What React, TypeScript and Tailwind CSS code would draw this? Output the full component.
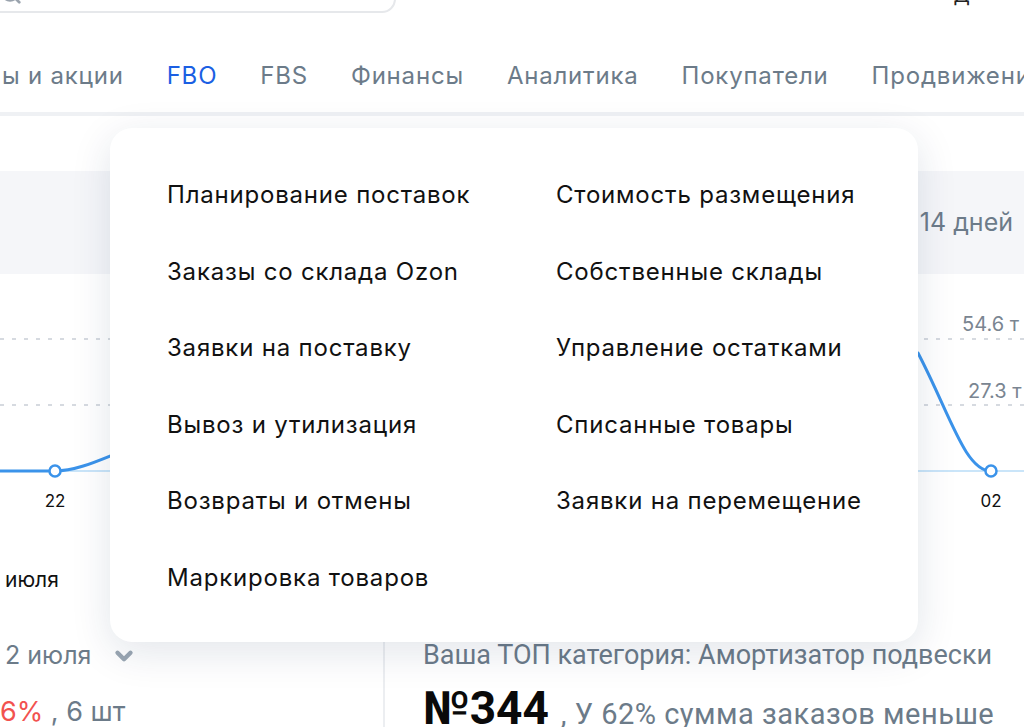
import React from 'react';
import { Search, ChevronDown } from 'lucide-react';

const tabs = ['Цены и акции', 'FBO', 'FBS', 'Финансы', 'Аналитика', 'Покупатели', 'Продвижение'];

const leftMenu = [
  'Планирование поставок',
  'Заказы со склада Ozon',
  'Заявки на поставку',
  'Вывоз и утилизация',
  'Возвраты и отмены',
  'Маркировка товаров',
];

const rightMenu = [
  'Стоимость размещения',
  'Собственные склады',
  'Управление остатками',
  'Списанные товары',
  'Заявки на перемещение',
];

const Chart = () => (
  <svg width="1024" height="257" viewBox="0 0 1024 257" className="block">
    <line x1="0" y1="65" x2="1024" y2="65" stroke="#c9ced6" strokeWidth="1.5" strokeDasharray="4 8" />
    <line x1="0" y1="131" x2="1024" y2="131" stroke="#c9ced6" strokeWidth="1.5" strokeDasharray="4 8" />
    <line x1="0" y1="197" x2="1024" y2="197" stroke="#b9dcf7" strokeWidth="1.5" />
    <path
      d="M0 197 L55 197 C75 197 95 188 120 178 C300 100 700 40 918 79 C950 140 965 197 991 197"
      fill="none"
      stroke="#3b93ea"
      strokeWidth="3"
      strokeLinecap="round"
    />
    <circle cx="55" cy="197" r="5.5" fill="#fff" stroke="#3b93ea" strokeWidth="2.5" />
    <circle cx="991" cy="197" r="5.5" fill="#fff" stroke="#3b93ea" strokeWidth="2.5" />
    <text x="55" y="233" textAnchor="middle" fontSize="17" fill="#111" fontFamily="Inter, sans-serif">22</text>
    <text x="991" y="233" textAnchor="middle" fontSize="17" fill="#111" fontFamily="Inter, sans-serif">02</text>
    <text x="962" y="57" fontSize="20" fill="#7a8591" fontFamily="Inter, sans-serif">54.6 т</text>
    <text x="968" y="124" fontSize="20" fill="#7a8591" fontFamily="Inter, sans-serif">27.3 т</text>
  </svg>
);

export default function App() {
  return (
    <div className="relative w-[1024px] h-[727px] overflow-hidden bg-white font-['Inter',sans-serif]">
      {/* top bar */}
      <div className="flex items-end justify-between h-[13px]">
        <div className="relative ml-[-20px] mt-[-40px] h-[53px] w-[416px] rounded-[14px] border-2 border-[#e6e8eb]">
          <Search className="absolute left-[18px] bottom-[6px] text-[#9aa3ad]" size={22} strokeWidth={3} />
        </div>
        <div className="mr-[54px] mt-[-16px] text-[20px] leading-[22px] text-[#222] self-start">Д</div>
      </div>

      {/* nav */}
      <div className="flex items-center gap-[43px] mt-[45px] h-[36px] ml-[-46px] whitespace-nowrap text-[24px] tracking-[0.8px] text-[#6c7b89]">
        {tabs.map((t) => (
          <span key={t} className={t === 'FBO' ? 'text-[#1b5fe3]' : ''}>
            {t}
          </span>
        ))}
      </div>
      <div className="mt-[18px] h-[4px] bg-[#eff1f4]" />

      {/* content */}
      <div className="mt-[55px] h-[103px] bg-[#f5f6f9] flex items-center justify-end pr-[11px]">
        <span className="text-[25px] text-[#6c7b89]">за 14 дней</span>
      </div>
      <Chart />
      <div className="mt-[36px] pl-[5px] text-[21px] leading-[26px] text-[#111]">июля</div>

      <div className="mt-[46px] flex">
        <div className="w-[383px] shrink-0 pl-[5px]">
          <div className="flex items-center gap-[20px] text-[25px] leading-[32px] text-[#6c7b89]">
            <span>2 июля</span>
            <ChevronDown size={26} strokeWidth={4} className="text-[#9ba7b3] mt-[2px]" />
          </div>
          <div className="mt-[25px] text-[27px] leading-[32px] ml-[-5px]">
            <span className="text-[#f2524f]">6%</span>
            <span className="text-[#6c7b89]"> , 6 шт</span>
          </div>
        </div>
        <div className="border-l-2 border-[#eceef1] pl-[38px] font-['Roboto',sans-serif] h-[100px]">
          <div className="text-[27px] leading-[32px] text-[#6c7b89] whitespace-nowrap">
            Ваша ТОП категория: Амортизатор подвески
          </div>
          <div className="mt-[13px] flex items-baseline whitespace-nowrap">
            <span className="text-[46px] font-bold leading-[48px] text-[#0a0a0a]">№344</span>
            <span className="ml-[12px] text-[29px] tracking-[0.5px] text-[#6c7b89]">, У 62% сумма заказов меньше</span>
          </div>
        </div>
      </div>

      {/* dropdown */}
      <div className="absolute left-[110px] top-[128px] w-[808px] h-[514px] rounded-[22px] bg-white shadow-[0_10px_40px_rgba(20,40,80,0.12)] pl-[57px] pt-[49px]">
        <div className="grid grid-cols-[389px_1fr] text-[24px] leading-[36px] tracking-[0.8px] text-[#111]">
          <div className="flex flex-col gap-[40.6px]">
            {leftMenu.map((m) => (
              <span key={m}>{m}</span>
            ))}
          </div>
          <div className="flex flex-col gap-[40.6px]">
            {rightMenu.map((m) => (
              <span key={m}>{m}</span>
            ))}
          </div>
        </div>
      </div>
    </div>
  );
}
